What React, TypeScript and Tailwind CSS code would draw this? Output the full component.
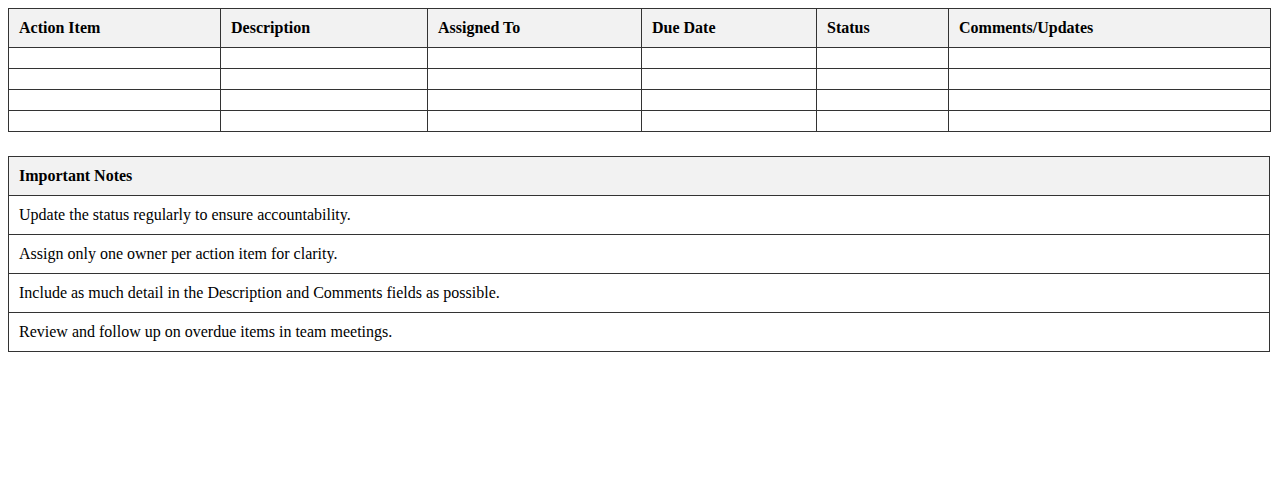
import React from "react";

const headers = [
  { label: "Action Item", w: "w-[212px]" },
  { label: "Description", w: "w-[207px]" },
  { label: "Assigned To", w: "w-[214px]" },
  { label: "Due Date", w: "w-[175px]" },
  { label: "Status", w: "w-[132px]" },
  { label: "Comments/Updates", w: "w-[322px]" },
];

const notes = [
  "Update the status regularly to ensure accountability.",
  "Assign only one owner per action item for clarity.",
  "Include as much detail in the Description and Comments fields as possible.",
  "Review and follow up on overdue items in team meetings.",
];

const cell = "border border-[#333] p-[10px] text-left";

function App() {
  return (
    <div className="min-h-screen bg-white p-2 font-['Liberation_Serif','Times_New_Roman',serif] text-base leading-[18px] text-black">
      <table className="w-full table-fixed border-collapse">
        <colgroup>
          {headers.map((h) => (
            <col key={h.label} className={h.w} />
          ))}
        </colgroup>
        <thead>
          <tr className="bg-[#f2f2f2]">
            {headers.map((h) => (
              <th key={h.label} className={`${cell} font-bold`}>
                {h.label}
              </th>
            ))}
          </tr>
        </thead>
        <tbody>
          {[0, 1, 2, 3].map((r) => (
            <tr key={r}>
              {headers.map((h) => (
                <td key={h.label} className={cell}></td>
              ))}
            </tr>
          ))}
        </tbody>
      </table>

      <table className="mt-[24px] w-full border-collapse">
        <thead>
          <tr className="bg-[#f2f2f2]">
            <th className={`${cell} font-bold`}>Important Notes</th>
          </tr>
        </thead>
        <tbody>
          {notes.map((n) => (
            <tr key={n}>
              <td className={cell}>{n}</td>
            </tr>
          ))}
        </tbody>
      </table>
    </div>
  );
}

export default App;
